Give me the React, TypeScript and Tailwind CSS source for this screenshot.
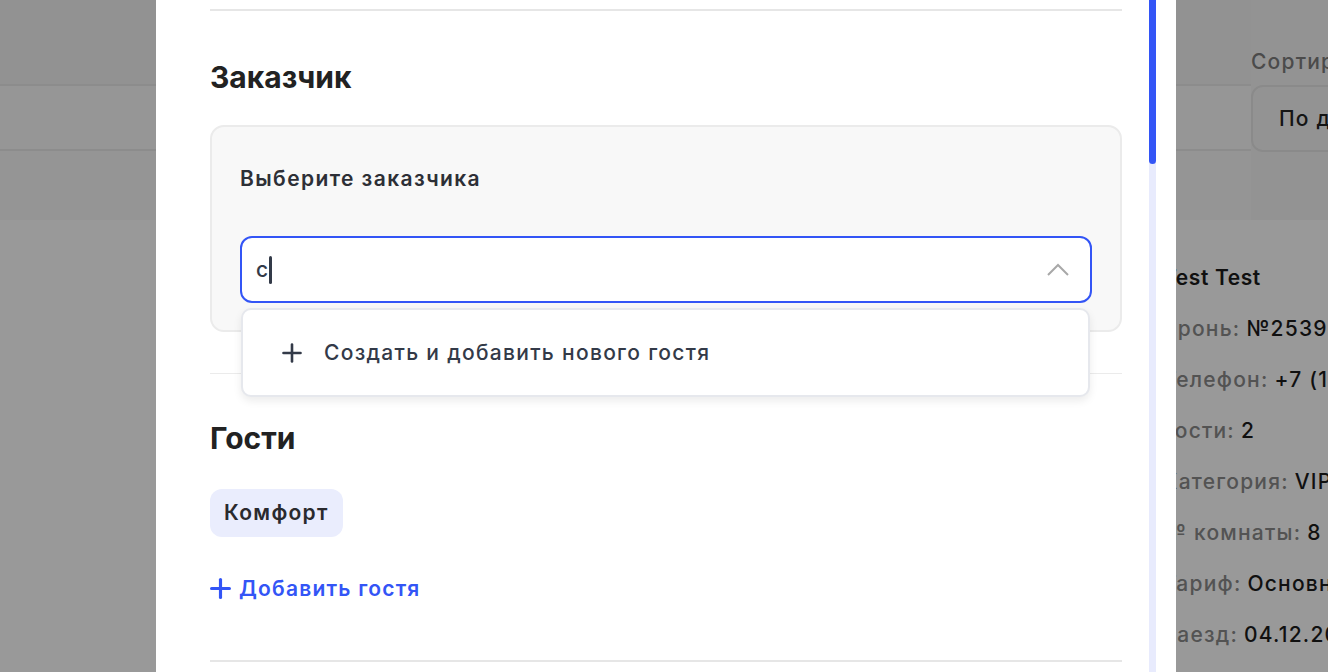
const details = [
  { label: 'Бронь:', value: '№25391' },
  { label: 'Телефон:', value: '+7 (123) 456' },
  { label: 'Гости:', value: '2' },
  { label: 'Категория:', value: 'VIP' },
  { label: '№ комнаты:', value: '8' },
  { label: 'Тариф:', value: 'Основной' },
  { label: 'Заезд:', value: '04.12.2024' },
]

function PlusIcon({ size, stroke, className }: { size: number; stroke: number; className?: string }) {
  return (
    <svg className={className} width={size} height={size} viewBox="0 0 20 20" fill="none" stroke="currentColor" strokeWidth={stroke} strokeLinecap="round">
      <line x1="10" y1="1.5" x2="10" y2="18.5" />
      <line x1="1.5" y1="10" x2="18.5" y2="10" />
    </svg>
  )
}

function BackgroundPage() {
  return (
    <div className="w-[1328px] h-[672px] overflow-hidden bg-white">
      <div className="h-[220px] bg-[#f6f6f6] grid grid-cols-[1251px_1fr]">
        <div className="flex flex-col">
          <div className="h-[86px] bg-[#f4f4f4] border-b-2 border-[#e9e9e9]" />
          <div className="h-[65px] bg-[#fbfbfb] border-b-2 border-[#e9e9e9]" />
          <div className="flex-1 bg-[#f8f8f8]" />
        </div>
        <div className="pt-[48px]">
          <div className="text-[21px] tracking-[1.2px] font-medium leading-[28px] text-[#7d7d7d] whitespace-nowrap">Сортировка</div>
          <div className="mt-[9px] h-[67px] w-[260px] rounded-[12px] border-2 border-[#e6e6e6] flex items-center pl-[26px] text-[21px] tracking-[1.2px] font-medium text-[#232323] whitespace-nowrap">
            По дате
          </div>
        </div>
      </div>
      <div className="pl-[1163px] pt-[44px] flex flex-col gap-[23px] whitespace-nowrap">
        <div className="text-[21px] tracking-[0.6px] font-semibold leading-[28px] text-[#1c1c1c]">Test Test</div>
        {details.map(d => (
          <div key={d.label} className="flex gap-[6px] text-[21px] tracking-[1.2px] leading-[28px] font-medium">
            <span className="text-[#8a8a8a]">{d.label}</span>
            <span className="text-[#1c1c1c]">{d.value}</span>
          </div>
        ))}
      </div>
    </div>
  )
}

function CustomerCard() {
  return (
    <div className="relative">
      <div className="rounded-[14px] border-2 border-[#ebebeb] bg-[#f8f8f8] px-[28px] pt-[38px] pb-[27px]">
        <div className="text-[21px] tracking-[1.4px] font-semibold leading-[28px] text-[#2d2f36]">Выберите заказчика</div>
        <div className="mt-[43px] h-[67px] rounded-[12px] border-2 border-[#3355f6] bg-white flex items-center pl-[14px] pr-[20px]">
          <span className="text-[21px] font-medium text-[#333a48]">с</span>
          <span className="ml-[1px] w-[3px] h-[28px] rounded-full bg-[#333a48]" />
          <svg className="ml-auto" width="24" height="14" viewBox="0 0 24 14" fill="none">
            <polyline points="2,12 12,2 22,12" stroke="#a8a8a8" strokeWidth="2" />
          </svg>
        </div>
      </div>
      {/* dropdown menu */}
      <div className="absolute left-[31px] right-[32px] top-[183px] h-[89px] rounded-[10px] border-2 border-[#e6e8ed] bg-white shadow-[0_4px_8px_rgba(0,0,0,0.08)] flex items-center pl-[39px] gap-[22px] z-10">
        <PlusIcon size={20} stroke={2.6} className="text-[#333a48]" />
        <span className="text-[21px] tracking-[1.3px] font-medium text-[#333a48]">Создать и добавить нового гостя</span>
      </div>
    </div>
  )
}

function Modal() {
  return (
    <div className="absolute top-0 left-[156px] w-[1020px] h-[672px] bg-white overflow-hidden">
      <div className="px-[54px] pt-[9px]">
        <div className="h-[2px] bg-[#e6e6e6]" />
        <h2 className="mt-[48px] text-[30px] font-bold leading-[36px] text-[#222222]">Заказчик</h2>
        <div className="mt-[30px]">
          <CustomerCard />
        </div>
        <div className="mt-[41px] h-px bg-[#ebebeb]" />
        <h2 className="mt-[46px] text-[30px] font-bold leading-[36px] text-[#222222]">Гости</h2>
        <div className="mt-[33px] flex">
          <span className="rounded-[12px] bg-[#eaedfd] px-[14px] h-[48px] flex items-center text-[21px] tracking-[1.3px] font-semibold text-[#2a2a2e]">Комфорт</span>
        </div>
        <button className="mt-[36px] flex items-center gap-[8px] text-[21px] tracking-[1.2px] font-semibold text-[#3355f6]">
          <PlusIcon size={21} stroke={3} />
          Добавить гостя
        </button>
        <div className="mt-[55px] h-[2px] bg-[#e6e6e6]" />
      </div>
      {/* scrollbar */}
      <div className="absolute top-0 bottom-0 left-[993px] w-[7px] bg-[#e8ebfd]">
        <div className="h-[164px] rounded-b-full bg-[#3355f6]" />
      </div>
    </div>
  )
}

export default function App() {
  return (
    <div className="relative w-[1328px] h-[672px] overflow-hidden font-[Inter,sans-serif]">
      <BackgroundPage />
      <div className="absolute inset-0 bg-black/40" />
      <Modal />
    </div>
  )
}
